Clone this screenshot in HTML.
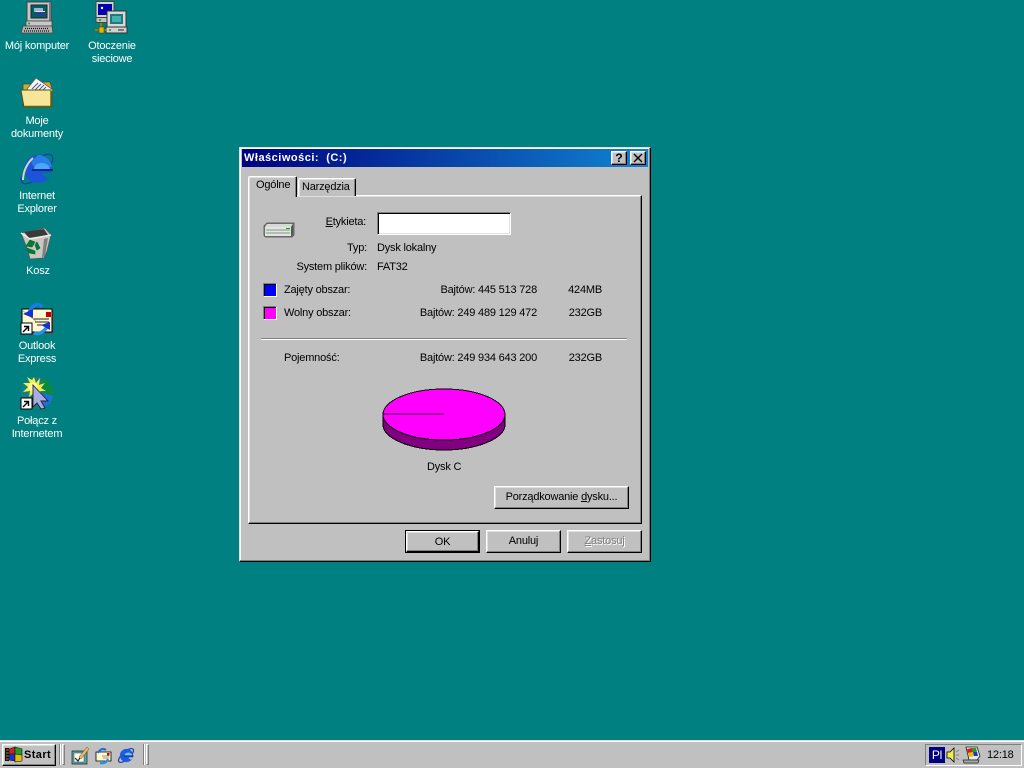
<!DOCTYPE html>
<html lang="pl"><head><meta charset="utf-8"><title>Właściwości: (C:)</title>
<style>
html,body{margin:0;padding:0;width:1024px;height:768px;overflow:hidden;background:#008080}
body{position:relative;font:11px/13px "Liberation Sans",sans-serif;color:#000;letter-spacing:-.2px}
.t{position:absolute;white-space:nowrap}
.w{color:#fff;text-align:center;width:76px}
.r{text-align:right}
.b{position:absolute;background:#c0c0c0;box-sizing:border-box;border:1px solid;border-color:#fff #000 #000 #fff;box-shadow:inset -1px -1px 0 #808080,inset 1px 1px 0 #dfdfdf}
svg{position:absolute;overflow:visible}
u{text-decoration:underline}
</style></head><body>

<!-- desktop icons -->
<svg style="left:20px;top:0" width="34" height="36" viewBox="0 0 34 36">
<path d="M7 2h24v19H7z" fill="#c8c8c8" stroke="#444"/><path d="M29 3h2v18h-2z" fill="#777"/>
<path d="M11 5h16v13H11z" fill="#006060" stroke="#222"/><path d="M14 8h9v4h-9z" fill="#9ab4d0"/><path d="M16 11h9v5h-9z" fill="#224488"/><path d="M16 11h9v1h-9z" fill="#e4e8f0"/>
<path d="M6 21h26v5H6z" fill="#c8c8c8" stroke="#444" stroke-width=".8"/><circle cx="9" cy="23.500" r="1" fill="#0a0"/>
<path d="M3 26h29l1 7H1z" fill="#b0b0b0" stroke="#444" stroke-width=".8"/><path d="M5 28.500h24M4 31h25" stroke="#111" stroke-dasharray="1 1" stroke-width="1.300"/></svg>
<div class="t w" style="left:-1px;top:40px">Mój komputer</div>

<svg style="left:95px;top:1px" width="34" height="34" viewBox="0 0 34 34">
<path d="M1 .5h18v16H1z" fill="#d0d0d0" stroke="#444"/><path d="M3 3h14v11H3z" fill="#0000b0"/><circle cx="7" cy="7" r="1.200" fill="#fff"/>
<path d="M1 16.500h18v5H1z" fill="#c0c0c0" stroke="#444"/><circle cx="5" cy="19" r="1" fill="#0a0"/>
<path d="M12 10h19v16H12z" fill="#d8d8d8" stroke="#333"/><path d="M15 13h13v10H15z" fill="#1a7c7c"/><path d="M17 15h9v6h-9z" fill="#55c0c0" opacity=".75"/>
<path d="M11 26h21v6H11z" fill="#d0d0d0" stroke="#333"/><circle cx="15" cy="29" r="1" fill="#0a0"/><path d="M23 29h6" stroke="#222"/>
<path d="M0 29h11M6 22v7" stroke="#a07800" stroke-width="2"/><rect x="4" y="26" width="5" height="6" fill="#e0b800" stroke="#333" stroke-width=".5"/></svg>
<div class="t w" style="left:74px;top:40px;line-height:13px">Otoczenie<br>sieciowe</div>

<svg style="left:20px;top:78px" width="34" height="30" viewBox="0 0 34 30">
<path d="M3 6h8l2-2h17l2 6v18H3z" fill="#c8ae30" stroke="#444" stroke-width=".8"/>
<path d="M7 11L16 0l17 12-4 6H9z" fill="#f6f6f6" stroke="#555" stroke-width=".7"/><path d="M12 11l6-6M15 12l6-6M18 13l6-6M21 14l5-5" stroke="#4a5a98"/>
<path d="M1 12h18l2 0h10v17H4z" fill="#f6e59a" stroke="#5a5000" stroke-width=".9"/><path d="M4 28.500h27M31 13v15" stroke="#706000" stroke-width="1.500"/></svg>
<div class="t w" style="left:-1px;top:115px">Moje<br>dokumenty</div>

<svg style="left:20px;top:152px" width="36" height="34" viewBox="0 0 36 34">
<ellipse cx="17" cy="17" rx="20" ry="8" transform="rotate(-42 17 17)" fill="none" stroke="#1a3fb0" stroke-width="1.300"/>
<circle cx="18" cy="17" r="14" fill="#1c54d8"/>
<path d="M18 3a14 14 0 0 1 14 12H24c-2-4-8-4-10 0l-3-5z" fill="#2a7ce8"/>
<path d="M14 17c0-8 15-8 16 0z" fill="#4aa8f4"/>
<path d="M23 21h9c-1 2-3 4-5 5l-4-3z" fill="#008080"/>
<path d="M12 18h21" stroke="#061a70" stroke-width="1.400"/>
<path d="M3 28C3 20 7 11 13 6" stroke="#d8d8b8" stroke-width="2" fill="none"/></svg>
<div class="t w" style="left:-1px;top:190px">Internet<br>Explorer</div>

<svg style="left:21px;top:227px" width="30" height="33" viewBox="0 0 30 33">
<path d="M0 6L24 1l6 7-4 16-3 7-14 1-3-11z" fill="#c8c8c0" stroke="#555" stroke-width=".7"/>
<path d="M3 5l20-3 4 6-19 3z" fill="#3a3a3a"/><path d="M0 6l3 2 6 4 21-4" fill="none" stroke="#eee" stroke-width="1.400"/>
<path d="M23 12l4-1-3 18-3 2z" fill="#808080"/>
<path d="M5 19l4-6 5 2-3 5zM16 15l3 6 -3 2-2-5zM6 21l8 3 0 3-6-1z" fill="#0a7a2a" stroke="#064" stroke-width=".6"/></svg>
<div class="t w" style="left:0;top:265px">Kosz</div>

<svg style="left:20px;top:302px" width="34" height="34" viewBox="0 0 34 34">
<path d="M2 7h30v23H2z" fill="#fff8d0" stroke="#000"/><path d="M33 8v23H5" stroke="#555" fill="none"/><rect x="26" y="10" width="5" height="5" fill="#c00000"/>
<path d="M13 17h16M15 20h14M17 23h12" stroke="#222" stroke-width=".9"/><path d="M2 8l15 12" stroke="#a88" stroke-width=".6"/>
<path d="M9 11C12 3 18 0 22 5" fill="none" stroke="#1f78e8" stroke-width="3.500"/><path d="M3 12l10-5v9z" fill="#1a30c8"/>
<path d="M14 31c6 2 11-2 14-8" fill="none" stroke="#2890e8" stroke-width="3.500"/><path d="M21 23l9-3v8z" fill="#1a30c8"/>
<rect x="1" y="21" width="11" height="11" fill="#fff" stroke="#000"/><path d="M3 30l5-5M4 24.500h4.500v4.500" stroke="#000" fill="none" stroke-width="1.400"/></svg>
<div class="t w" style="left:-1px;top:340px">Outlook<br>Express</div>

<svg style="left:20px;top:376px" width="34" height="34" viewBox="0 0 34 34">
<circle cx="17" cy="17" r="16" fill="#1a7c86"/><path d="M22 2a16 16 0 0 1 11 18l-10-3z" fill="#0a8a40"/><path d="M23 17l10 3c-1 6-5 10-11 12l-4-6z" fill="#1e70e0"/>
<path d="M14 1l2 6 4-5-1 7 6-2-4 5 5 3-6 0 3 6-6-4-1 6-2-6-5 4 1-6-7 1 5-5-5-4 7 0-3-6 5 3z" fill="#f0f040"/><circle cx="13" cy="11" r="4.500" fill="#fff8b0"/>
<path d="M13 9l15 16-7 0 4 7-4 1-4-6-4 4z" fill="#a8aee4" stroke="#222" stroke-width=".9"/>
<rect x="1" y="22" width="11" height="11" fill="#fff" stroke="#000"/><path d="M3 31l5-5M4 25.500h4.500v4.500" stroke="#000" fill="none" stroke-width="1.400"/></svg>
<div class="t w" style="left:-1px;top:415px">Połącz z<br>Internetem</div>

<!-- dialog -->
<div style="position:absolute;left:239px;top:147px;width:412px;height:415px;box-sizing:border-box;background:#c0c0c0;border:1px solid;border-color:#dfdfdf #000 #000 #dfdfdf;box-shadow:inset -1px -1px 0 #808080,inset 1px 1px 0 #fff"></div>
<div style="position:absolute;left:242px;top:149px;width:406px;height:18px;background:linear-gradient(90deg,#000080,#1084d0)"></div>
<div class="t" style="left:244px;top:152px;color:#fff;font-weight:bold;letter-spacing:.5px">Właściwości:&nbsp; (C:)</div>
<div class="b" style="left:611px;top:151px;width:16px;height:14px;font:bold 12px/12px 'Liberation Sans',sans-serif;text-align:center">?</div>
<div class="b" style="left:630px;top:151px;width:16px;height:14px"><svg style="left:3px;top:2px" width="8" height="8"><path d="M0 0l8 8M8 0l-8 8" stroke="#000" stroke-width="1.400"/></svg></div>

<!-- tab pane -->
<div style="position:absolute;left:248px;top:195px;width:394px;height:329px;box-sizing:border-box;border:1px solid;border-color:#fff #000 #000 #fff;box-shadow:inset -1px -1px 0 #808080,inset 1px 1px 0 #dfdfdf"></div>
<div style="position:absolute;left:248px;top:176px;width:49px;height:21px;box-sizing:border-box;background:#c0c0c0;border:1px solid;border-color:#fff #000 transparent #fff;border-bottom:0;border-radius:2px 2px 0 0;box-shadow:inset -1px 0 0 #808080,inset 1px 1px 0 #dfdfdf"></div>
<div style="position:absolute;left:298px;top:178px;width:58px;height:18px;box-sizing:border-box;background:#c0c0c0;border:1px solid;border-color:#fff #000 #fff #fff;border-bottom:0;border-radius:2px 2px 0 0;box-shadow:inset -1px 0 0 #808080,inset 1px 1px 0 #dfdfdf"></div>
<div class="t" style="left:256px;top:179px">Ogólne</div>
<div class="t" style="left:302px;top:181px">Narzędzia</div>

<!-- drive icon -->
<svg style="left:263px;top:222px" width="32" height="17" viewBox="0 0 32 17">
<path d="M4 1h27v12l-2 2H3a2 2 0 0 1-2-2V4z" fill="#808080" stroke="#444" stroke-width=".7"/>
<path d="M4 2h26l-2 3H2z" fill="#d8d8d8"/>
<path d="M2 5h26v9H2z" fill="#dfe6df"/><path d="M3 8h24M3 11h24" stroke="#8a948a"/><path d="M23 6h4v1h-4z" fill="#0a0"/><path d="M28 5l2-3v10l-2 3z" fill="#555"/></svg>

<div class="t r" style="left:286px;top:216px;width:80px"><u>E</u>tykieta:</div>
<div style="position:absolute;left:377px;top:212px;width:134px;height:23px;box-sizing:border-box;background:#fff;border:1px solid;border-color:#808080 #fff #fff #808080;box-shadow:inset 1px 1px 0 #000,inset -1px -1px 0 #dfdfdf"></div>

<div class="t r" style="left:286px;top:242px;width:81px">Typ:</div>
<div class="t" style="left:377px;top:242px">Dysk lokalny</div>
<div class="t r" style="left:267px;top:261px;width:100px">System plików:</div>
<div class="t" style="left:377px;top:261px">FAT32</div>

<div style="position:absolute;left:263px;top:283px;width:14px;height:14px;box-sizing:border-box;background:#0000ff;border:1px solid;border-color:#808080 #fff #fff #808080;box-shadow:inset 1px 1px 0 #000"></div>
<div class="t" style="left:284px;top:284px">Zajęty obszar:</div>
<div class="t r" style="left:400px;top:284px;width:137px">Bajtów: 445 513 728</div>
<div class="t r" style="left:540px;top:284px;width:62px">424MB</div>

<div style="position:absolute;left:263px;top:306px;width:14px;height:14px;box-sizing:border-box;background:#ff00ff;border:1px solid;border-color:#808080 #fff #fff #808080;box-shadow:inset 1px 1px 0 #000"></div>
<div class="t" style="left:284px;top:307px">Wolny obszar:</div>
<div class="t r" style="left:400px;top:307px;width:137px">Bajtów: 249 489 129 472</div>
<div class="t r" style="left:540px;top:307px;width:62px">232GB</div>

<div style="position:absolute;left:261px;top:338px;width:366px;height:1px;background:#808080;border-bottom:1px solid #fff"></div>

<div class="t" style="left:284px;top:352px">Pojemność:</div>
<div class="t r" style="left:400px;top:352px;width:137px">Bajtów: 249 934 643 200</div>
<div class="t r" style="left:540px;top:352px;width:62px">232GB</div>

<!-- pie -->
<svg style="left:382px;top:388px" width="124" height="64" viewBox="0 0 124 64" shape-rendering="crispEdges">
<path d="M1 26v11c0 13 27 25 61 25s61-12 61-25V26z" fill="#800080" stroke="#000"/>
<ellipse cx="62" cy="26.500" rx="61" ry="25.500" fill="#ff00ff" stroke="#000"/>
<path d="M1 26h61" stroke="#400040"/></svg>
<div class="t" style="left:427px;top:461px">Dysk C</div>

<!-- buttons -->
<div class="b" style="left:494px;top:486px;width:135px;height:23px;text-align:center;line-height:21px">Porządkowanie <u>d</u>ysku...</div>
<div class="b" style="left:405px;top:530px;width:75px;height:23px;text-align:center;line-height:20px;outline:1px solid #000;outline-offset:-1px;border-width:2px">OK</div>
<div class="b" style="left:486px;top:530px;width:75px;height:23px;text-align:center;line-height:20px">Anuluj</div>
<div class="b" style="left:567px;top:530px;width:75px;height:23px;text-align:center;line-height:20px;color:#808080;text-shadow:1px 1px 0 #fff"><u>Z</u>astosuj</div>

<!-- taskbar -->
<div style="position:absolute;left:0;top:740px;width:1024px;height:28px;background:#c0c0c0;border-top:1px solid #dfdfdf;box-sizing:border-box;box-shadow:inset 0 1px 0 #fff"></div>
<div class="b" style="left:2px;top:744px;width:54px;height:22px"></div>
<svg style="left:5px;top:747px" width="18" height="16" viewBox="0 0 18 16">
<path d="M0 1h4v13H0z" fill="#111"/><path d="M1 3h3M1 6h3M1 9h3M1 12h3" stroke="#c8c020" stroke-width=".7"/><path d="M4 2l6-2v7H4z" fill="#d02020" stroke="#111" stroke-width=".6"/><path d="M10 0l7 2v6l-7-1z" fill="#20a020" stroke="#111" stroke-width=".6"/><path d="M4 7h6v7l-6-1z" fill="#2030d0" stroke="#111" stroke-width=".6"/><path d="M10 7l7 1v6l-7 1z" fill="#e0c000" stroke="#111" stroke-width=".6"/></svg>
<div class="t" style="left:24px;top:749px;font-weight:bold;letter-spacing:.4px">Start</div>
<div style="position:absolute;left:59px;top:744px;width:1px;height:21px;background:#808080"></div>
<div style="position:absolute;left:60px;top:744px;width:1px;height:21px;background:#fff"></div>
<div style="position:absolute;left:62px;top:744px;width:3px;height:21px;box-sizing:border-box;border:1px solid;border-color:#fff #808080 #808080 #fff"></div>

<svg style="left:71px;top:747px" width="18" height="18" viewBox="0 0 18 18">
<path d="M1 4h15v13H1z" fill="#5aa0a8" stroke="#222" stroke-width=".7"/><path d="M3 6h10v9H3z" fill="#f8f8ec" stroke="#444" stroke-width=".5"/><path d="M4 11l3 3 3-5" stroke="#222" stroke-width="1.200" fill="none"/><path d="M8 10L16 0l2 2-8 10z" fill="#e8b860" stroke="#654" stroke-width=".5"/></svg>
<svg style="left:95px;top:748px" width="17" height="16" viewBox="0 0 17 16">
<path d="M1 4h15v9H1z" fill="#fff8d0" stroke="#000" stroke-width=".8"/><rect x="12" y="5" width="2.500" height="2.500" fill="#c00"/><path d="M7 8h7M8 10h6" stroke="#333" stroke-width=".6"/>
<path d="M3 5C5 1 8 0 11 2" fill="none" stroke="#1f6fe0" stroke-width="2.200"/><path d="M5 15c4 1 7-1 8-4" fill="none" stroke="#2890e8" stroke-width="2.200"/></svg>
<svg style="left:118px;top:747px" width="17" height="17" viewBox="0 0 36 34">
<ellipse cx="17" cy="17" rx="20" ry="8" transform="rotate(-42 17 17)" fill="none" stroke="#1a3fb0" stroke-width="2.500"/>
<circle cx="18" cy="17" r="14" fill="#1c5ce0"/><path d="M14 17c0-8 15-8 16 0z" fill="#7cc0f0"/><path d="M23 21h9c-1 2-3 4-5 5l-4-3z" fill="#c0c0c0"/><path d="M12 18h21" stroke="#061a70" stroke-width="2"/></svg>
<div style="position:absolute;left:143px;top:744px;width:1px;height:21px;background:#808080"></div>
<div style="position:absolute;left:144px;top:744px;width:1px;height:21px;background:#fff"></div>
<div style="position:absolute;left:146px;top:744px;width:3px;height:21px;box-sizing:border-box;border:1px solid;border-color:#fff #808080 #808080 #fff"></div>

<!-- tray -->
<div style="position:absolute;left:925px;top:744px;width:97px;height:22px;box-sizing:border-box;border:1px solid;border-color:#808080 #fff #fff #808080"></div>
<div class="t" style="left:929px;top:747px;width:16px;height:16px;background:#000080;color:#fff;text-align:center;line-height:16px;font-size:12px">Pl</div>
<svg style="left:946px;top:747px" width="14" height="16" viewBox="0 0 14 16">
<path d="M1 5h3l4-4v14l-4-4H1z" fill="#f4ec50" stroke="#000" stroke-width=".8"/><path d="M10 5l3-2M10 8h3M10 11l3 2" stroke="#808080"/></svg>
<svg style="left:962px;top:746px" width="19" height="18" viewBox="0 0 19 18">
<path d="M4 1h11l3 9-3 4H7z" fill="#e8e8e8" stroke="#222" stroke-width=".8"/><path d="M5 3l5-1 1 4-5 1z" fill="#d02020"/><path d="M10 2l4 0 1 4-4 0z" fill="#20a020"/><path d="M6 7l5-1 1 4-5 1z" fill="#e0c000"/><path d="M11 6h4l1 4h-4z" fill="#2030d0"/>
<path d="M1 14h16l-1 3H2z" fill="#a8a8a8" stroke="#222" stroke-width=".7"/></svg>
<div class="t" style="left:987px;top:749px">12:18</div>
</body></html>
